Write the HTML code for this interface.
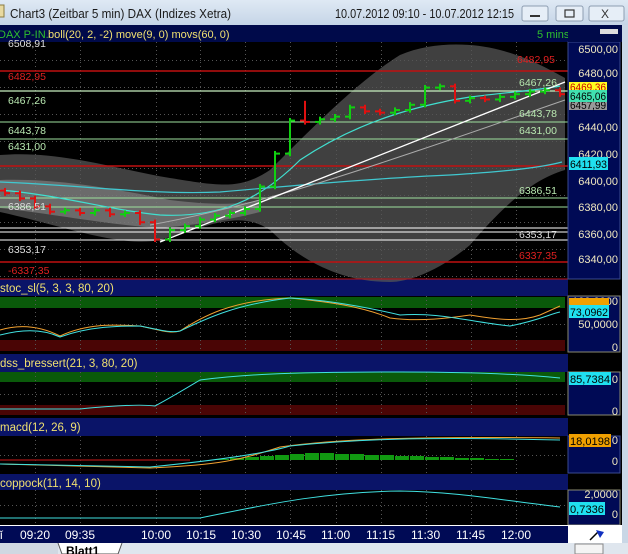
<!DOCTYPE html>
<html><head><meta charset="utf-8"><style>
body{margin:0;width:628px;height:554px;overflow:hidden;background:#c9d7e6;font-family:"Liberation Sans",sans-serif;}
svg{position:absolute;left:0;top:0}
text{font-family:"Liberation Sans",sans-serif;}
</style></head><body>
<svg id="s" width="628" height="554" viewBox="0 0 628 554">
<defs><linearGradient id="tb" x1="0" y1="0" x2="0" y2="1"><stop offset="0" stop-color="#dfe9f4"/><stop offset="1" stop-color="#c5d5e7"/></linearGradient></defs>
<rect x="0" y="0" width="628" height="25" fill="url(#tb)"/>
<rect x="0" y="25" width="622" height="518" fill="#000"/>
<rect x="622" y="25" width="6" height="518" fill="#c9d7e6"/>
<!-- title -->
<rect x="-4" y="5" width="8" height="12" fill="#e8d9a0" stroke="#8a7a40"/>
<text x="10" y="18" font-size="13" fill="#1a1a1a" textLength="221" lengthAdjust="spacingAndGlyphs">Chart3 (Zeitbar 5 min)  DAX (Indizes Xetra)</text>
<text x="335" y="18" font-size="12.5" fill="#1a1a1a" textLength="179" lengthAdjust="spacingAndGlyphs">10.07.2012 09:10 - 10.07.2012 12:15</text>
<rect x="522" y="6" width="26" height="15" rx="2" fill="#e6eef7" stroke="#8d9db1"/>
<rect x="530" y="15" width="10" height="2" fill="#333"/>
<rect x="556" y="6" width="27" height="15" rx="2" fill="#e6eef7" stroke="#8d9db1"/>
<rect x="565" y="10" width="9" height="7" fill="none" stroke="#333" stroke-width="1.2"/>
<rect x="589" y="6" width="35" height="15" rx="2" fill="#e6eef7" stroke="#8d9db1"/>
<text x="601" y="18" font-size="12" fill="#333">X</text>
<!-- pane headers -->
<rect x="0" y="25" width="568" height="17" fill="#000a4a"/>
<text x="-2" y="38" font-size="11" fill="#2ec02e">DAX P-IN.</text><text x="48" y="38" font-size="11" fill="#f0e070">boll(20, 2, -2) move(9, 0) movs(60, 0)</text>
<text x="537" y="38" font-size="11" fill="#2ec02e">5 mins</text>
<rect x="0" y="279" width="568" height="17" fill="#0a1468"/><text x="0" y="292" font-size="11.5" fill="#f0e070">stoc_sl(5, 3, 3, 80, 20)</text>
<rect x="0" y="354" width="568" height="18" fill="#0a1468"/><text x="0" y="367" font-size="11.5" fill="#f0e070">dss_bressert(21, 3, 80, 20)</text>
<rect x="0" y="418" width="568" height="18" fill="#0a1468"/><text x="0" y="431" font-size="11.5" fill="#f0e070">macd(12, 26, 9)</text>
<rect x="0" y="474" width="568" height="16" fill="#0a1468"/><text x="0" y="487" font-size="11.5" fill="#f0e070">coppock(11, 14, 10)</text>
<!-- indicator bands -->
<rect x="0" y="297" width="565" height="11" fill="#0a5a0a"/><rect x="0" y="340" width="565" height="11" fill="#4a0505"/>
<rect x="0" y="372" width="565" height="10" fill="#0a5a0a"/><rect x="0" y="405" width="565" height="10" fill="#4a0505"/>
<g id="grid" stroke="#555" stroke-dasharray="1,3"></g>
<!-- bollinger -->
<path d="M0,155 C60,150 120,170 170,178 C220,186 240,190 270,170 C320,120 360,80 400,55 C430,42 470,42 500,50 C530,58 550,70 565,78 L565,170 C530,180 500,210 470,245 C440,270 410,282 390,282 C340,282 300,260 270,230 C240,210 210,225 160,240 C120,248 60,225 0,212 Z" fill="#555" fill-opacity="0.75"/>
<path d="M0,180 C60,178 120,190 170,200 C210,205 240,205 260,200 L260,212 C220,222 190,225 160,228 C110,225 60,215 0,208 Z" fill="#888" fill-opacity="0.6"/>
<!-- hlines -->
<line x1="0" y1="71" x2="568" y2="71" stroke="#c01010" stroke-width="1.5"/>
<line x1="0" y1="91" x2="568" y2="91" stroke="#c8f0c0" stroke-width="1.2"/>
<line x1="0" y1="122" x2="568" y2="122" stroke="#9ee09e"/>
<line x1="0" y1="139" x2="568" y2="139" stroke="#9ee09e"/>
<line x1="0" y1="166" x2="568" y2="166" stroke="#c01010" stroke-width="1.5"/>
<line x1="0" y1="198" x2="568" y2="198" stroke="#9ee09e"/>
<line x1="0" y1="207" x2="568" y2="207" stroke="#9ee09e"/>
<line x1="0" y1="228" x2="568" y2="228" stroke="#fff"/>
<line x1="0" y1="232" x2="568" y2="232" stroke="#fff"/>
<line x1="0" y1="240" x2="568" y2="240" stroke="#fff"/>
<line x1="0" y1="262" x2="568" y2="262" stroke="#c01010" stroke-width="1.5"/>
<line x1="0" y1="279" x2="568" y2="279" stroke="#c01010"/>
<!-- MA lines -->
<path d="M0,190 C60,195 110,210 160,215 C220,218 260,200 300,160 C360,120 420,105 470,97 C510,92 540,90 560,86" fill="none" stroke="#40e0d0" stroke-width="1.2"/>
<path d="M0,182 C80,185 150,195 220,192 C300,185 380,178 450,175 C500,172 540,168 562,162" fill="none" stroke="#40c8d0" stroke-width="1.2"/>
<path d="M150,225 C260,205 360,170 420,150 C480,130 530,112 565,100" fill="none" stroke="#aaa" stroke-width="1"/>
<line x1="160" y1="242" x2="565" y2="82" stroke="#fff" stroke-width="1.3"/>
<g id="candles"></g>
<!-- left labels -->
<g font-size="10.5">
<text x="8" y="47" fill="#ddd">6508,91</text>
<text x="8" y="80" fill="#e02020">6482,95</text>
<text x="8" y="104" fill="#b8e8b0">6467,26</text>
<text x="8" y="134" fill="#b8e8b0">6443,78</text>
<text x="8" y="150" fill="#b8e8b0">6431,00</text>
<text x="8" y="210" fill="#ddd">6386,51</text>
<text x="8" y="253" fill="#ddd">6353,17</text>
<text x="8" y="274" fill="#e02020">-6337,35</text>
<text x="517" y="63" fill="#e02020">6482,95</text>
<text x="519" y="86" fill="#b8e8b0">6467,26</text>
<text x="519" y="117" fill="#b8e8b0">6443,78</text>
<text x="519" y="134" fill="#b8e8b0">6431,00</text>
<text x="519" y="194" fill="#b8e8b0">6386,51</text>
<text x="519" y="238" fill="#ddd">6353,17</text>
<text x="519" y="259" fill="#e02020">6337,35</text>
</g>
<!-- indicator lines -->
<path d="M0,330 C20,324 40,326 60,336 C90,322 120,325 140,326 C160,330 170,334 180,331 C200,318 230,300 290,298 C330,302 360,306 390,318 C420,322 450,318 470,315 C500,320 520,322 540,315 L560,306" fill="none" stroke="#f0a030"/>
<path d="M0,335 C20,330 40,328 60,337 C90,326 120,326 140,326 C160,330 170,333 180,331 C200,322 230,305 290,298 C330,300 370,308 400,315 C440,312 470,322 510,326 C540,320 550,314 560,312" fill="none" stroke="#40e0e0"/>
<path d="M0,409 L80,409 C110,406 140,404 155,406 C170,398 180,392 200,380 C240,375 280,372 400,372 C460,372 520,374 560,378" fill="none" stroke="#40e0e0"/>
<g fill="#119911" id="hist"></g>
<path d="M0,460 L190,460" stroke="#8b1010" stroke-width="1.5"/>
<path d="M0,464 L150,468 C220,465 240,460 280,447 C330,440 400,436 560,438" fill="none" stroke="#f0a030"/>
<path d="M0,464 L150,467 C200,462 260,455 290,446 C340,441 400,436 560,440" fill="none" stroke="#40e0e0"/>
<path d="M0,518 L140,518 L200,518 C260,506 320,492 400,491 C460,492 500,500 560,507" fill="none" stroke="#40e0e0"/>
<!-- right scale -->
<rect x="568" y="42" width="52" height="237" fill="#000a55" stroke="#3a4a90"/>
<rect x="568" y="296" width="52" height="56" fill="#000a55" stroke="#8a8a70"/>
<rect x="568" y="372" width="52" height="43" fill="#000a55" stroke="#8a8a70"/>
<rect x="568" y="436" width="52" height="37" fill="#000a55" stroke="#3a4a90"/>
<rect x="568" y="490" width="52" height="35" fill="#000a55" stroke="#8a8a70"/>
<rect x="568" y="25" width="54" height="17" fill="#000a4a"/>
<rect x="600" y="29" width="18" height="5" fill="#ddd"/>
<g font-size="11" fill="#f0e8c0" text-anchor="end">
<text x="618" y="53">6500,00</text><text x="618" y="77">6480,00</text><text x="618" y="131">6440,00</text>
<text x="618" y="158">6420,00</text><text x="618" y="185">6400,00</text><text x="618" y="211">6380,00</text>
<text x="618" y="238">6360,00</text><text x="618" y="263">6340,00</text>
<text x="618" y="305">100,0000</text><text x="618" y="328">50,0000</text><text x="618" y="351">0</text>
<text x="618" y="383">0</text><text x="618" y="415">0</text>
<text x="618" y="444">0</text><text x="618" y="465">0</text>
<text x="618" y="498">2,0000</text><text x="618" y="518">0</text>
</g>
<g font-size="11" fill="#000">
<rect x="569" y="82" width="38" height="10" fill="#ffff20"/><text x="570" y="91" fill="#c00" textLength="36" lengthAdjust="spacingAndGlyphs">6469,36</text>
<rect x="569" y="100" width="38" height="10" fill="#999"/><text x="570" y="109" textLength="36" lengthAdjust="spacingAndGlyphs">6457,99</text>
<rect x="569" y="90" width="38" height="12" fill="#40e0b0"/><text x="570" y="100" textLength="36" lengthAdjust="spacingAndGlyphs">6465,06</text>
<rect x="569" y="157" width="39" height="13" fill="#20e0f0"/><text x="570" y="168" textLength="37" lengthAdjust="spacingAndGlyphs">6411,93</text>
<rect x="569" y="298" width="40" height="7" fill="#f0a000"/>
<rect x="569" y="305" width="40" height="13" fill="#20e0f0"/><text x="570" y="316" textLength="38" lengthAdjust="spacingAndGlyphs">73,0962</text>
<rect x="569" y="372" width="42" height="13" fill="#20e0f0"/><text x="570" y="383" textLength="40" lengthAdjust="spacingAndGlyphs">85,7384</text>
<rect x="569" y="434" width="42" height="13" fill="#f0a000"/><text x="570" y="445" textLength="40" lengthAdjust="spacingAndGlyphs">18,0198</text>
<rect x="569" y="502" width="36" height="13" fill="#20e0f0"/><text x="570" y="513" textLength="34" lengthAdjust="spacingAndGlyphs">0,7336</text>
</g>
<!-- time axis -->
<rect x="0" y="525" width="568" height="18" fill="#000a55"/>
<line x1="0" y1="525.5" x2="568" y2="525.5" stroke="#fff"/>
<rect x="568" y="525" width="54" height="18" fill="#fff"/>
<path d="M590,540 L598,532" stroke="#000" stroke-width="1.5"/><path d="M596,530 L604,532 L600,538 Z" fill="#1030c0"/>
<g font-size="12" fill="#fff">
<text x="0" y="539">ǐ</text><text x="20" y="539">09:20</text><text x="65" y="539">09:35</text><text x="141" y="539">10:00</text>
<text x="186" y="539">10:15</text><text x="231" y="539">10:30</text><text x="276" y="539">10:45</text><text x="321" y="539">11:00</text>
<text x="366" y="539">11:15</text><text x="411" y="539">11:30</text><text x="456" y="539">11:45</text><text x="501" y="539">12:00</text>
</g>
<!-- bottom tabs -->
<rect x="0" y="543" width="628" height="11" fill="#dfe6ee"/>
<rect x="0" y="543" width="58" height="11" fill="#d0d8e2"/>
<path d="M58,543 L62,554 L118,554 L122,543" fill="#fff" stroke="#555"/>
<text x="66" y="555" font-size="12" font-weight="bold" fill="#000">Blatt1</text>
<rect x="575" y="544" width="28" height="10" fill="#f4f4f4" stroke="#888"/>
</svg>
<script>
var s='http://www.w3.org/2000/svg';
function el(p,t,a){var e=document.createElementNS(s,t);for(var k in a)e.setAttribute(k,a[k]);p.appendChild(e);return e;}
var g=document.getElementById('grid');
[35,80,156,200,245,290,336,381,426,471,516].forEach(function(x){
[[42,279],[296,352],[372,415],[436,473],[490,525]].forEach(function(r){el(g,'line',{x1:x+.5,y1:r[0],x2:x+.5,y2:r[1]});});});
for(var y=60;y<279;y+=27)el(g,'line',{x1:0,y1:y+.5,x2:565,y2:y+.5});
[324,394,455,505].forEach(function(y){el(g,'line',{x1:0,y1:y+.5,x2:565,y2:y+.5});});
function Y(p){return 48+(6500-p)*1.32;}
var c=[6390,6386,6380,6376,6377,6375,6377,6374,6375,6368,6355,6362,6365,6370,6373,6375,6378,6395,6420,6445,6444,6446,6448,6455,6452,6451,6453,6457,6470,6471,6460,6462,6461,6463,6465,6467,6468,6465];
var cg=document.getElementById('candles'),prev=6392;
c.forEach(function(v,i){var x=5+i*15,col=v>=prev?'#10d010':'#e01010';
var hi=Math.max(v,prev)+2,lo=Math.min(v,prev)-2;
if(i==20){hi=6460}
el(cg,'line',{x1:x,y1:Y(hi),x2:x,y2:Y(lo),stroke:col,'stroke-width':2});
el(cg,'line',{x1:x-5,y1:Y(prev),x2:x,y2:Y(prev),stroke:col,'stroke-width':2});
el(cg,'line',{x1:x,y1:Y(v),x2:x+5,y2:Y(v),stroke:col,'stroke-width':2});prev=v;});
var h=document.getElementById('hist');
var hv=[0,0,0,0,0,0,0,0,0,0,0,0,0,0,1,2,3,4,5,6,7,7,6,6,5,5,4,4,3,3,2,2,1,1];
hv.forEach(function(v,i){if(v)el(h,'rect',{x:i*15+5,y:460-v,width:14,height:v});});
</script>
</body></html>
